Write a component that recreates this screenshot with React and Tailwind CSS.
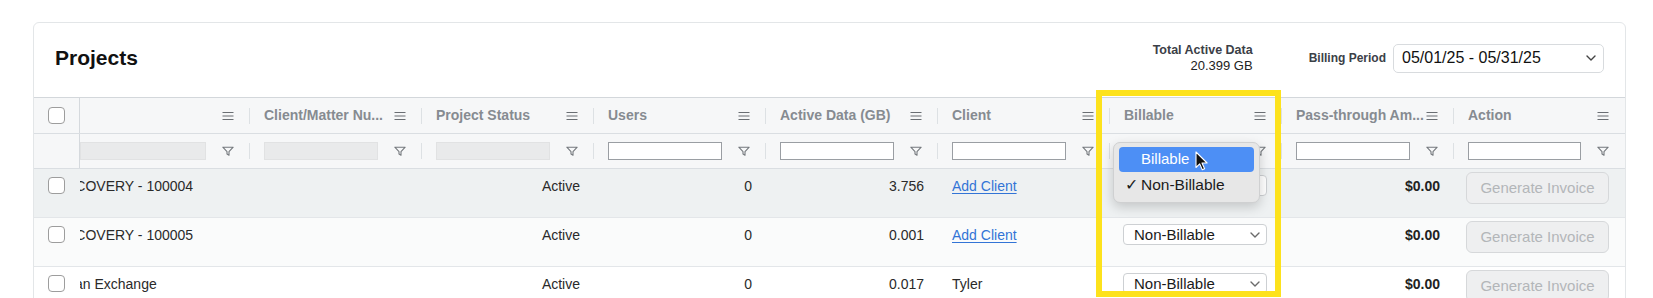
import React from 'react';

const cols = [
  { key: 'name', header: '', filter: 'disabled', cell: 'w-[170px] shrink-0', pad: 'pl-0' },
  { key: 'matter', header: 'Client/Matter Nu...', filter: 'disabled', cell: 'w-[172px] shrink-0', pad: 'pl-[14px]' },
  { key: 'status', header: 'Project Status', filter: 'disabled', cell: 'w-[172px] shrink-0', pad: 'pl-[14px]' },
  { key: 'users', header: 'Users', filter: 'text', cell: 'w-[172px] shrink-0', pad: 'pl-[14px]' },
  { key: 'data', header: 'Active Data (GB)', filter: 'text', cell: 'w-[172px] shrink-0', pad: 'pl-[14px]' },
  { key: 'client', header: 'Client', filter: 'text', cell: 'w-[172px] shrink-0', pad: 'pl-[14px]' },
  { key: 'billable', header: 'Billable', filter: 'text', cell: 'w-[172px] shrink-0', pad: 'pl-[14px]' },
  { key: 'pass', header: 'Pass-through Am...', filter: 'text', cell: 'w-[172px] shrink-0', pad: 'pl-[14px]' },
  { key: 'action', header: 'Action', filter: 'text', cell: 'flex-1 min-w-0', pad: 'pl-[14px]', last: true },
];

const rows = [
  { name: 'DISCOVERY - 100004', shift: 'ml-[-28px]', status: 'Active', users: '0', data: '3.756', client: null, bg: 'bg-[#eef1f2]' },
  { name: 'DISCOVERY - 100005', shift: 'ml-[-28px]', status: 'Active', users: '0', data: '0.001', client: null, bg: 'bg-[#fafbfb]' },
  { name: 'an Exchange', shift: 'ml-[-5px]', status: 'Active', users: '0', data: '0.017', client: 'Tyler', bg: 'bg-white' },
];

function Hamburger() {
  return (
    <svg width="12" height="10" viewBox="0 0 12 10" className="shrink-0">
      <path d="M0.5 1.5h11M0.5 5h11M0.5 8.5h11" stroke="#6a6e73" strokeWidth="1.2" />
    </svg>
  );
}

function Funnel() {
  return (
    <svg width="12" height="11" viewBox="0 0 12 11" className="shrink-0">
      <path d="M0.8 1.2h10.4L7 5.6v3.6L5 8.1V5.6z" fill="none" stroke="#74787d" strokeWidth="1.1" strokeLinejoin="round" />
    </svg>
  );
}

function Chevron({ size = 9, color = '#555' }) {
  return (
    <svg width={size} height={size * 0.6} viewBox="0 0 10 6" className="shrink-0">
      <path d="M1 1l4 4 4-4" fill="none" stroke={color} strokeWidth="1.4" strokeLinecap="round" strokeLinejoin="round" />
    </svg>
  );
}

function Checkbox() {
  return <span className="block w-[17px] h-[17px] rounded-[4px] border border-[#9d9d9d] bg-white" />;
}

function Divider({ hidden }) {
  return <span className={hidden ? 'ml-[15px] w-px h-4' : 'ml-[15px] w-px h-4 bg-[#dde1e4]'} />;
}

function BillableSelect() {
  return (
    <div className="flex items-center justify-between w-[144px] h-[21px] ml-[-1px] rounded-[4px] border border-[#cdd0d3] bg-white pl-[10px] pr-[6px]">
      <span className="text-[15px] leading-[19px] text-[#1a1a1a]">Non-Billable</span>
      <Chevron size={10} color="#6b6b6b" />
    </div>
  );
}

function DataCell({ col, row }) {
  if (col.key === 'name') {
    return (
      <div className="overflow-hidden pt-[7px]">
        <div className={`whitespace-nowrap text-[14px] leading-5 text-[#2a2a2a] ${row.shift}`}>{row.name}</div>
      </div>
    );
  }
  if (col.key === 'matter') return <div />;
  if (col.key === 'status' || col.key === 'users' || col.key === 'data') {
    return <div className="pt-[7px] pr-[14px] text-right text-[14px] leading-5 text-[#2a2a2a]">{row[col.key]}</div>;
  }
  if (col.key === 'client') {
    return (
      <div className="pt-[7px] pl-[14px] text-[14px] leading-5">
        {row.client ? (
          <span className="text-[#2a2a2a]">{row.client}</span>
        ) : (
          <span className="text-[#3274d6] underline underline-offset-2">Add Client</span>
        )}
      </div>
    );
  }
  if (col.key === 'billable') {
    return (
      <div className="pt-[6px] pl-[14px]">
        <BillableSelect />
      </div>
    );
  }
  if (col.key === 'pass') {
    return <div className="pt-[7px] pr-[14px] text-right text-[14px] leading-5 font-bold text-[#222]">$0.00</div>;
  }
  return (
    <div className="pt-[3px] pl-[12px]">
      <div className="flex items-center justify-center w-[143px] h-[32px] rounded-[6px] border border-[#d6d8da] bg-[#eeeff0] text-[15px] text-[#b3b6b9]">
        Generate Invoice
      </div>
    </div>
  );
}

export default function App() {
  return (
    <div className="relative w-[1653px] h-[298px] overflow-hidden bg-white pt-[22px] pl-[33px] font-['Liberation_Sans',Arial,sans-serif]">
      <div className="w-[1593px] h-[300px] rounded-[6px] border border-[#e3e6e8] bg-white overflow-hidden">
        {/* title bar */}
        <div className="flex items-center h-[74px] pl-[21px] pr-[21px] pb-[4px]">
          <h1 className="flex-1 text-[21px] font-bold text-[#111]">Projects</h1>
          <div className="text-right">
            <div className="text-[12.5px] leading-[15px] font-bold text-[#3b4047]">Total Active Data</div>
            <div className="text-[13px] leading-[15px] text-[#222]">20.399 GB</div>
          </div>
          <div className="ml-[56px] text-[12px] font-bold text-[#3b4047]">Billing Period</div>
          <div className="ml-[7px] flex items-center justify-between w-[211px] h-[29px] rounded-[5px] border border-[#d8dbde] bg-white pl-[8px] pr-[7px]">
            <span className="text-[16px] text-[#111]">05/01/25 - 05/31/25</span>
            <Chevron size={10} color="#444" />
          </div>
        </div>

        {/* grid */}
        <div className="border-t border-[#d3d7db]">
          {/* header row */}
          <div className="flex h-[36px] border-b border-[#dadee2] bg-[#f6f7f8]">
            <div className="flex items-center w-[46px] shrink-0 pl-[14px] border-r border-[#d5d9dd]">
              <Checkbox />
            </div>
            {cols.map((c) => (
              <div key={c.key} className={`${c.cell} flex items-center ${c.pad} pr-0`}>
                <span className="flex-1 min-w-0 truncate text-[14px] font-bold text-[#868b91]">{c.header}</span>
                <Hamburger />
                <Divider hidden={c.last} />
              </div>
            ))}
          </div>

          {/* filter row */}
          <div className="flex h-[35px] border-b border-[#dadee2] bg-[#f6f7f8]">
            <div className="w-[46px] shrink-0 border-r border-[#d5d9dd]" />
            {cols.map((c) => (
              <div key={c.key} className={`${c.cell} flex items-center ${c.pad}`}>
                {c.filter === 'disabled' ? (
                  <span className="flex-1 h-[18px] bg-[#e9eaeb] border border-[#e1e2e3]" />
                ) : (
                  <span className="flex-1 h-[18px] bg-white border border-[#9a9ea3]" />
                )}
                <span className="ml-[16px]">
                  <Funnel />
                </span>
                <Divider hidden={c.last} />
              </div>
            ))}
          </div>

          {/* data rows */}
          {rows.map((r, i) => (
            <div key={i} className={`flex h-[49px] border-b border-[#e3e6e9] ${r.bg}`}>
              <div className="w-[46px] shrink-0 pl-[14px] pt-[8px]">
                <Checkbox />
              </div>
              {cols.map((c) => (
                <div key={c.key} className={c.cell}>
                  <DataCell col={c} row={r} />
                </div>
              ))}
            </div>
          ))}
        </div>
      </div>

      {/* native select menu, open over row 1 */}
      <div className="absolute left-[1113px] top-[142px] w-[147px] h-[61px] rounded-[7px] border border-[#cfd0d1] bg-[#e7e7e7] shadow-[0_4px_12px_rgba(0,0,0,0.18)] px-[5px] pt-[4px]">
        <div className="flex items-center h-[25px] rounded-[4px] bg-[#4d8ff5] pl-[22px] text-[15px] text-white">Billable</div>
        <div className="flex items-center h-[26px] pl-[6px] text-[15.5px] text-[#1b1b1b]">
          <span className="w-[16px]">✓</span>
          <span>Non-Billable</span>
        </div>
      </div>

      {/* pointer */}
      <svg className="absolute left-[1195px] top-[151px]" width="13" height="20" viewBox="0 0 13 20">
        <path d="M1 1v15.5l3.7-3.6 2.6 5.9 2.3-1-2.6-5.8h5.1z" fill="#111" stroke="#fff" strokeWidth="1.1" strokeLinejoin="round" />
      </svg>

      {/* highlight annotation */}
      <div className="absolute left-[1096px] top-[90px] w-[185px] h-[207px] border-[6px] border-[#fde21c]" />
    </div>
  );
}
